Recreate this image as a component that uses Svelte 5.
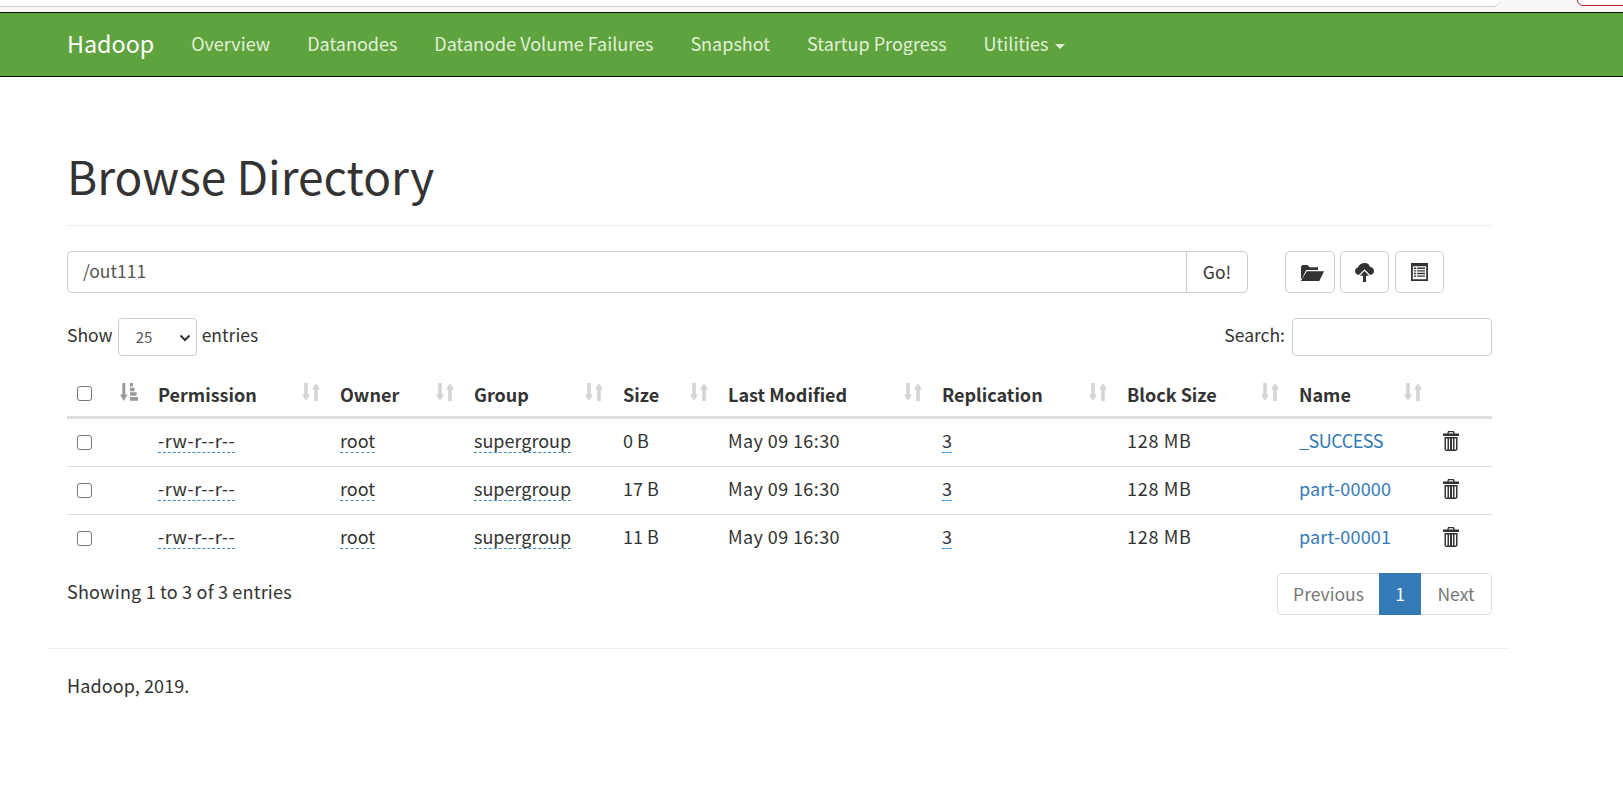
<script>
  const nav = ['Overview', 'Datanodes', 'Datanode Volume Failures', 'Snapshot', 'Startup Progress'];
  const heads = [
    ['Permission', 'c3'], ['Owner', 'c4'], ['Group', 'c5'], ['Size', 'c6'], ['Last Modified', 'c7'],
    ['Replication', 'c8'], ['Block Size', 'c9'], ['Name', 'c10']
  ];
  const rows = [
    { size: '0 B', name: '_SUCCESS', cls: 'under' },
    { size: '17 B', name: 'part-00000', cls: 'part' },
    { size: '11 B', name: 'part-00001', cls: 'part' }
  ];
</script>

{#snippet sort()}
  <svg class="sorticon" viewBox="0 0 18 18" aria-hidden="true"><path d="M2.200 0h3.600v11.500H8L4 18 0 11.500h2.200zM14 0l4 6.500h-2.200V18h-3.600V6.500H10z"/></svg>
{/snippet}

{#snippet trash()}
  <svg class="trash" viewBox="0 0 16 20" aria-hidden="true"><path fill-rule="evenodd" d="M5 0h6l.8 2.400H16V5H0V2.400h4.200zM6 1.200l-.4 1.200h4.800L10 1.200zM1.500 6h13v12.500L13 20H3l-1.500-1.500zM3 7.500V18.500h1.500V7.500zM6 7.500V18.500h1V7.500zM9 7.500V18.500h1V7.500zM11.500 7.500V18.500H13V7.500z"/></svg>
{/snippet}

<div class="chrome"><div class="addr"></div><div class="pill"></div></div>
<nav class="navbar">
  <a class="brand" href="#top">Hadoop</a>
  {#each nav as item}<a class="link" href="#top">{item}</a>{/each}
  <a class="link" href="#top">Utilities <span class="caret"></span></a>
</nav>

<main class="container">
  <h1>Browse Directory</h1>
  <div class="toolbar">
    <div class="pathgroup">
      <input class="path" value="/out111" />
      <button class="go">Go!</button>
    </div>
    <div class="tools">
      <button class="tool t1" aria-label="Create directory">
        <svg viewBox="0 0 24 17" class="ic1"><path d="M2.500 1h5l2 2.200h8.500V6H6.200L2 14.500H1V2.500zM6.800 7.200H24L19.300 17H.8z"/></svg>
      </button>
      <button class="tool t2" aria-label="Upload">
        <svg viewBox="0 0 20 20" class="ic2"><path d="M10.500 0c2.600 0 4.700 1.700 5.200 4 2.400.2 4.300 2 4.300 4.400 0 2.300-1.700 4.100-4 4.100L10 6.500 4 12.500C1.700 12.500 0 10.700 0 8.500 0 6.700 1.200 5.200 3 4.700 3.800 2 6.800 0 10.500 0z"/><path d="M10 8.500l4.800 5h-3.200V20H8.400v-6.500H5.200z"/></svg>
      </button>
      <button class="tool t3" aria-label="Cut and paste">
        <svg viewBox="0 0 17 18" class="ic3"><path fill-rule="evenodd" d="M0 0h17v18H0zM1.800 3.200v13h13.400v-13zM3 4.600h2.200V6H3zM6.200 4.600H14V6H6.200zM3 7.200h2.200v1.400H3zM6.200 7.200H14v1.400H6.200zM3 9.800h2.200v1.400H3zM6.200 9.800H14v1.400H6.200zM3 12.400h2.200v1.400H3zM6.200 12.400H14v1.400H6.200z"/></svg>
      </button>
    </div>
  </div>

  <div class="controls">
    <label class="show"><span class="lbl">Show</span>
      <span class="select"><span class="val">25</span><svg viewBox="0 0 12 8" class="chev"><path d="M1.500 1.500 6 6l4.500-4.500" fill="none" stroke="#333" stroke-width="2"/></svg></span>
      <span class="lbl">entries</span></label>
    <label class="search"><span class="lbl">Search:</span> <input class="searchbox" /></label>
  </div>

  <table>
    <thead>
      <tr>
        <th class="c1"><span class="check"></span></th>
        <th class="c2"><svg class="sorted" viewBox="0 0 18 18" aria-hidden="true"><path d="M2.300 0h3v11.500H7.600L3.800 18 0 11.500h2.300zM10 0h3v3.500h-3zM10 4.700h4.500v3.500H10zM10 9.300h6.500v3.500H10zM10 14h8v3.800h-8z"/></svg></th>
        {#each heads as [label, cls]}
          <th class={cls}><span class="hrow">{label}{@render sort()}</span></th>
        {/each}
        <th class="c11"></th>
      </tr>
    </thead>
    <tbody>
      {#each rows as row}
        <tr>
          <td><span class="check"></span></td>
          <td></td>
          <td><span class="dash perm">-rw-r--r--</span></td>
          <td><span class="dash">root</span></td>
          <td><span class="dash">supergroup</span></td>
          <td>{row.size}</td>
          <td class="date">May 09 16:30</td>
          <td><span class="dash">3</span></td>
          <td class="block">128 MB</td>
          <td><a class="file {row.cls}" href="#top">{row.name}</a></td>
          <td>{@render trash()}</td>
        </tr>
      {/each}
    </tbody>
  </table>

  <div class="info">
    <span>Showing 1 to 3 of 3 entries</span>
    <div class="pager">
      <span class="pg first">Previous</span><span class="pg active">1</span><span class="pg last">Next</span>
    </div>
  </div>
</main>

<footer>
  <p>Hadoop, 2019.</p>
</footer>

<style>
  :global(body) {
    margin: 0;
    background: #fff;
    color: #333;
    font-family: "Noto Sans CJK SC", "Noto Sans", sans-serif;
    font-size: 17.5px;
  }
  .chrome { height: 12px; background: #f7f7f7; position: relative; overflow: hidden; }
  .addr { height: 6px; width: 1500px; background: #fff; border-bottom: 1px solid #cfcfcf; border-bottom-right-radius: 10px; }
  .pill { position: absolute; left: 1577px; top: -10px; width: 60px; height: 14px; border: 1px solid #b02a2a; border-radius: 6px; background: #fff; }
  .navbar {
    height: 65px; box-sizing: border-box;
    background: #5fa33e;
    border-top: 1px solid #111; border-bottom: 1px solid #111;
    display: flex; align-items: center; padding: 0 0 3px 67px; gap: 37px; font-size: 18px;
  }
  a { text-decoration: none; }
  .brand { color: #fff; font-size: 23.300px; }
  .link { color: #e0f0d8; }
  .caret {
    display: inline-block; width: 0; height: 0; margin-left: 2px; vertical-align: middle;
    border-top: 5px solid; border-left: 5px solid transparent; border-right: 5px solid transparent;
  }
  .container { margin: 0 131px 0 67px; }
  h1 {
    font-size: 46px; font-weight: 400; margin: 0; padding: 76px 0 27px; line-height: 45px;
    border-bottom: 1px solid #eee; color: #333;
  }
  .toolbar { display: flex; margin-top: 25px; }
  .pathgroup { display: flex; width: 1181px; height: 42px; }
  .path {
    flex: 1; min-width: 0; box-sizing: border-box; border: 1px solid #ccc; border-right: 0;
    border-radius: 5px 0 0 5px; padding: 0 15px 3px; font: inherit; color: #555;
  }
  .go {
    width: 62px; background: #fff; border: 1px solid #ccc; border-radius: 0 5px 5px 0;
    font: inherit; color: #333; padding: 0 0 2px;
  }
  .tools { display: flex; margin-left: 37px; gap: 5px; }
  .tool {
    height: 42px; background: #fff; border: 1px solid #ccc; border-radius: 5px; padding: 0;
    display: flex; align-items: center; justify-content: center; color: #333;
  }
  .t1 { width: 50px; padding-left: 4px; } .t2 { width: 49px; } .t3 { width: 49px; margin-left: 1px; }
  .tool svg { fill: #333; }
  .ic1 { width: 24px; height: 17px; } .ic2 { width: 19px; height: 19px; } .ic3 { width: 17px; height: 18px; }
  .controls { display: flex; justify-content: space-between; align-items: center; margin-top: 25px; height: 38px; }
  .show, .search { display: flex; align-items: center; }
  .lbl { margin-bottom: 6px; }
  .select {
    box-sizing: border-box; width: 79px; height: 38px; margin: 0 5px; border: 1px solid #ccc; border-radius: 4px;
    position: relative; display: flex; align-items: center; padding: 0 0 2px 17px; font-size: 15px; color: #555;
  }
  .chev { position: absolute; right: 5px; top: 15px; width: 12px; height: 8px; }
  .searchbox { box-sizing: border-box; width: 200px; height: 38px; margin-left: 7px; border: 1px solid #ccc; border-radius: 4px; }
  table { width: 1425px; border-collapse: collapse; table-layout: fixed; margin-top: 16px; font-size: 18px; }
  th { box-sizing: border-box; text-align: left; font-weight: 700; padding: 11px 10px 10px; border-bottom: 3px solid #ddd; line-height: 23px; }
  td { padding: 8px 10px 13px; border-bottom: 1px solid #ddd; line-height: 26px; height: 26px; box-sizing: content-box; }
  tbody tr:last-child td { border-bottom: 0; }
  .c1 { width: 43px; } .c2 { width: 38px; } .c3 { width: 182px; } .c4 { width: 134px; }
  .c5 { width: 149px; } .c6 { width: 105px; } .c7 { width: 214px; } .c8 { width: 185px; }
  .c9 { width: 172px; } .c10 { width: 143px; } .c11 { width: 60px; }
  .hrow { display: flex; justify-content: space-between; align-items: center; }
  .sorticon { width: 18px; height: 18px; fill: #d4d4d4; flex: none; margin-top: -5px; }
  .sorted { width: 18px; height: 18px; fill: #999; display: block; margin-top: -5px; }
  .check { display: block; box-sizing: border-box; width: 15px; height: 15px; border: 1px solid #767676; border-radius: 3px; background: #fff; margin-top: 4px; }
  th .check { margin-top: -2px; }
  .dash { border-bottom: 1px dashed #3a8cc9; display: inline-block; line-height: 24px; }
  .perm { letter-spacing: 0.5px; }
  .date { letter-spacing: 0.4px; }
  .block { letter-spacing: 0.7px; }
  .file { color: #337ab7; }
  .under { letter-spacing: -0.5px; }
  .part { letter-spacing: 0.17px; }
  .trash { width: 16px; height: 20px; fill: #333; display: block; margin: 1px 0 0 1px; }
  .info { display: flex; justify-content: space-between; align-items: flex-start; margin-top: 11px; }
  .info > span { padding-top: 5px; font-size: 18px; letter-spacing: 0.2px; }
  .pager { display: flex; height: 42px; }
  .pg { box-sizing: border-box; display: flex; align-items: center; justify-content: center; border: 1px solid #ddd; color: #777; height: 42px; padding-bottom: 2px; }
  .first { width: 102px; border-radius: 5px 0 0 5px; border-right: 0; }
  .active { width: 42px; background: #337ab7; border-color: #337ab7; color: #fff; }
  .last { width: 71px; border-radius: 0 5px 5px 0; border-left: 0; }
  footer { margin: 33px 113px 0 48px; border-top: 1px solid #eee; padding: 23px 19px; font-size: 18px; }
  footer p { margin: 0; letter-spacing: 0.1px; }
</style>
